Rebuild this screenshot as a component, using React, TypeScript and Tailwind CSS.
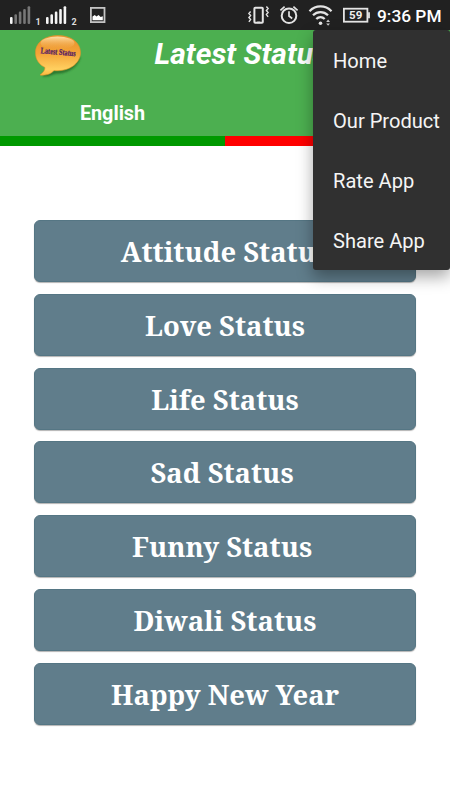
import React, { useState } from 'react';

const categories = [
  { name: 'Attitude Status', style: '' },
  { name: 'Love Status', style: '' },
  { name: 'Life Status', style: '' },
  { name: 'Sad Status', style: 'pr-[6px]' },
  { name: 'Funny Status', style: 'pr-[6px]' },
  { name: 'Diwali Status', style: '' },
  { name: 'Happy New Year', style: '' },
];

const menuItems = ['Home', 'Our Product', 'Rate App', 'Share App'];

function Signal({ sim, weak }: { sim: string; weak?: boolean }) {
  return (
    <svg width="36" height="30" viewBox="0 0 36 30" className="shrink-0">
      {[0, 1, 2, 3, 4].map((i) => (
        <rect
          key={i}
          x={i * 4.4}
          y={17 - i * 2.7}
          width="2.6"
          height={7 + i * 2.7}
          rx="1.1"
          fill={weak && i > 0 ? '#777777' : '#f5f5f5'}
        />
      ))}
      <text x="25.6" y="25.2" fontSize="9" fontWeight="700" fontFamily="Roboto, sans-serif" fill="#dddddd">
        {sim}
      </text>
    </svg>
  );
}

function StatusBar() {
  return (
    <div className="flex h-[30px] items-center bg-[#212121] pl-[10px] pr-[8.5px] text-white">
      <Signal sim="1" weak />
      <Signal sim="2" />
      <svg width="16" height="30" viewBox="0 0 16 30" className="ml-[8px] shrink-0">
        <rect x="0.9" y="7.9" width="13.6" height="14.2" fill="none" stroke="#c4c4c4" strokeWidth="1.8" />
        <path d="M2.5 20.2v-3.8l2.3-1.5 1.6 1.7 2.2-1.7 2 2 2.2-.7v4z" fill="#ffffff" />
      </svg>
      <svg width="124" height="30" viewBox="246 0 124 30" className="ml-auto shrink-0" fill="none" stroke="#e4e4e4">
        {/* vibrate */}
        <rect x="253.4" y="7.7" width="8.4" height="15" rx="0.8" strokeWidth="2" />
        <path d="M256.2 22.4h3" strokeWidth="1.6" />
        <path d="M249.6 11.5l-1.7 2 1.7 2-1.7 2 1.7 2-1.7 2.3M265.4 6.5l1.7 2-1.7 2 1.7 2-1.7 2 1.7 2.3" strokeWidth="1.4" />
        {/* alarm */}
        <circle cx="288" cy="15.7" r="7.3" strokeWidth="2" />
        <path d="M288 11.2V16l3.2 2.5M279.4 10.3l4.2-3.6M296.6 10.3l-4.2-3.6" strokeWidth="1.7" />
        {/* wifi */}
        <path d="M308.5 11.2c6.3-6.3 15.7-6.3 22 0M312 15.2c4.3-4.2 10.7-4.2 15 0M315.3 19c2.5-2.4 5.9-2.4 8.4 0" strokeWidth="2.3" />
        <circle cx="319.5" cy="23.2" r="1.8" fill="#e4e4e4" stroke="none" />
        <path d="M325.2 22l1.9-2.4 1.9 2.4zM325.2 23.4l1.9 2.4 1.9-2.4z" fill="#cccccc" stroke="none" />
        {/* battery */}
        <rect x="342.9" y="8.7" width="23.5" height="13" strokeWidth="1.8" />
        <path d="M368 12.3v6" strokeWidth="1.8" />
        <text x="354.7" y="19.2" textAnchor="middle" fontSize="11.5" fontWeight="700" fontFamily="Roboto, sans-serif" fill="#f0f0f0" stroke="none">
          59
        </text>
      </svg>
      <span className="ml-[6.5px] mt-px whitespace-nowrap text-[17.3px] font-medium leading-[30px]">9:36 PM</span>
    </div>
  );
}

function Logo() {
  return (
    <svg width="52" height="46" viewBox="0 0 52 46" className="overflow-visible">
      <defs>
        <linearGradient id="bubble" x1="0" y1="0" x2="0" y2="1">
          <stop offset="0" stopColor="#e8902c" />
          <stop offset="0.45" stopColor="#f4a438" />
          <stop offset="0.85" stopColor="#ffd060" />
          <stop offset="1" stopColor="#fbb83c" />
        </linearGradient>
        <linearGradient id="shine" x1="0" y1="0" x2="0" y2="1">
          <stop offset="0" stopColor="#ffe0a8" />
          <stop offset="1" stopColor="#f0a03a" stopOpacity="0.15" />
        </linearGradient>
        <filter id="soft" x="-20%" y="-20%" width="150%" height="150%">
          <feGaussianBlur stdDeviation="1.2" />
        </filter>
      </defs>
      <path d="M10 40c8 0 9-3 14-3 11 0 20-7 22-15" fill="none" stroke="#27702a" strokeWidth="3" filter="url(#soft)" />
      <path
        d="M25 .5C12 .5 2.5 7.5 2.5 17.5c0 7 3.5 12 9.5 15 0 3-2 5-5 7.5 6 .8 11-1 14-4.5 15 1.500 26.5-7 26.5-18C47.5 7.5 38 .5 25 .5z"
        fill="url(#bubble)"
        stroke="#e09428"
        strokeWidth="0.6"
      />
      <ellipse cx="24.5" cy="8" rx="17" ry="6.5" fill="url(#shine)" />
      <text x="7.5" y="19.6" transform="rotate(5 24 19)" textLength="35" lengthAdjust="spacingAndGlyphs" fontSize="8.5" fontWeight="700" fontFamily="Liberation Serif, serif" fill="#552064" stroke="#552064" strokeWidth="0.25">
        Latest Status
      </text>
    </svg>
  );
}

export default function App() {
  const [tab, setTab] = useState('english');

  return (
    <div className="relative h-[800px] w-[450px] overflow-hidden bg-white font-['Roboto',sans-serif]">
      <StatusBar />
      <header className="h-[106px] bg-[#4caf50] text-white">
        <div className="flex h-[53px] items-start">
          <div className="ml-[33px] mt-[5px] w-[52px]">
            <Logo />
          </div>
          <h1 className="ml-[69.5px] mt-[5px] whitespace-nowrap text-[30px] font-bold italic leading-[38px]">Latest Status</h1>
        </div>
        <nav className="grid h-[53px] grid-cols-2">
          <button onClick={() => setTab('english')} className="mt-[16px] self-start text-[19.8px] font-bold leading-[30px]">
            English
          </button>
          <button onClick={() => setTab('hindi')} aria-label="Hindi" />
        </nav>
      </header>
      <div className="grid h-[10px] grid-cols-2">
        <div className={tab === 'english' ? 'bg-[#009900]' : 'bg-[#ff0000]'} />
        <div className={tab === 'english' ? 'bg-[#ff0000]' : 'bg-[#009900]'} />
      </div>

      <main className="flex flex-col gap-[11.75px] px-[34px] pt-[74px]">
        {categories.map((item) => (
          <button
            key={item.name}
            className="h-[62px] shrink-0 rounded-[6px] border border-[#557684] bg-[#607d8b] pt-[2px] text-center font-['Noto_Serif','DejaVu_Serif',serif] text-[27.4px] font-bold leading-[58px] text-white shadow-[0_1px_1px_rgba(0,0,0,0.3)]"
          >
            <span className={item.style}>{item.name}</span>
          </button>
        ))}
      </main>

      <div className="absolute right-0 top-[30px] h-[240px] w-[137px] rounded-[3px] bg-[#303030] shadow-[0_7px_16px_rgba(0,0,0,0.35)]">
        {menuItems.map((item) => (
          <button key={item} className="flex h-[60px] w-full items-center whitespace-nowrap pl-[20px] pt-[2px] text-[20.1px] text-[#f5f5f5]">
            {item}
          </button>
        ))}
      </div>
    </div>
  );
}
